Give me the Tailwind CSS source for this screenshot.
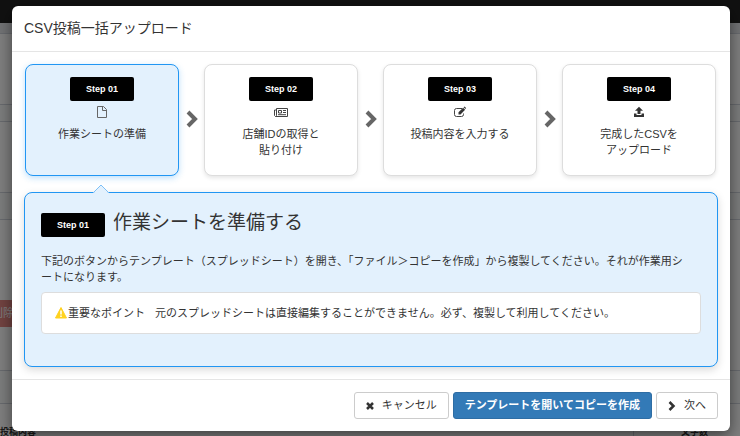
<!DOCTYPE html>
<html lang="ja">
<head>
  <meta charset="UTF-8">
  <meta name="viewport" content="width=device-width, initial-scale=1.0">
  <title>CSV投稿一括アップロード</title>
  <script src="https://cdn.jsdelivr.net/npm/@tailwindcss/browser@4"></script>
</head>
<body class="min-h-screen overflow-hidden bg-white font-['Liberation_Sans','Noto_Sans_CJK_JP',sans-serif] text-[11px] leading-4 text-[#333]">

  <!-- page behind the dialog -->
  <div class="absolute inset-0 flex flex-col overflow-hidden" aria-hidden="true">
    <div class="h-[23px] shrink-0 bg-[#222]"></div>
    <div class="h-[11px] shrink-0 border-b border-gray-300 bg-gray-200"></div>
    <div class="h-[71px] shrink-0 border-b border-gray-300"></div>
    <div class="h-[17px] shrink-0 border-b border-gray-300 bg-gray-50"></div>
    <div class="h-[71px] shrink-0 border-b border-gray-300"></div>
    <div class="h-[27px] shrink-0 border-b border-gray-300 bg-gray-50"></div>
    <div class="h-[151px] shrink-0 border-b border-gray-300 pt-[80px]">
      <span class="-ml-2 block h-[27px] w-16 bg-[#d9534f] leading-[27px] text-white opacity-70">削除</span>
    </div>
    <div class="h-[33px] shrink-0 border-b border-gray-300 bg-gray-50"></div>
    <div class="flex grow justify-between text-[9px] font-bold">
      <span class="pt-5">投稿内容</span>
      <span class="w-[107px] border-l border-gray-300 pt-5 pr-8 text-right">文字数</span>
    </div>
  </div>
  <div class="absolute inset-0 bg-black/50"></div>

  <!-- dialog -->
  <div class="relative pt-[6px] pr-[10px] pl-3">
    <div role="dialog" aria-labelledby="dialogTitle" class="rounded-md bg-white shadow-[0_5px_15px_rgba(0,0,0,0.5)]">
      <div class="border-b border-[#e5e5e5] px-3 py-3">
        <h4 id="dialogTitle" class="text-[14px] leading-[21px]">CSV投稿一括アップロード</h4>
      </div>

      <div class="px-3 pt-3 pb-3">
        <ol class="flex items-stretch pr-0.5 pl-px">
          <li class="flex h-[112px] flex-1 flex-col items-center rounded-lg border border-[#2196f3] bg-[#e3f1fd] pt-3 text-center shadow-[0_2px_6px_rgba(33,150,243,0.3)]">
            <span class="w-16 rounded-xs bg-black text-center text-[9px] leading-6 font-bold text-white">Step 01</span>
            <svg class="mt-[3px] h-4 w-4" viewBox="0 0 16 16" fill="none" stroke="#666">
              <path d="M3.5 2.5h6l3 3v8h-9z" stroke-linejoin="round"/>
              <path d="M8.500 2.500v4h4"/>
            </svg>
            <span class="mt-[6px]">作業シートの準備</span>
          </li>
          <li class="flex w-[25px] items-center justify-center pb-0.5">
            <svg class="h-[18px] w-3" viewBox="0 0 12 18" fill="none" stroke="#666" stroke-width="4"><path d="M2 2l7 7-7 7"/></svg>
          </li>
          <li class="flex h-[112px] flex-1 flex-col items-center rounded-lg border border-[#ddd] bg-white pt-3 text-center shadow-[0_2px_4px_rgba(0,0,0,0.1)]">
            <span class="w-16 rounded-xs bg-black text-center text-[9px] leading-6 font-bold text-white">Step 02</span>
            <svg class="mt-[3px] h-4 w-4" viewBox="0 0 16 16" fill="none" stroke="#444">
              <path d="M3.500 4.500h11v8h-12l-1-1v-5.500h2M3.500 4.500v7l-1 1"/>
              <path d="M5.500 6.500h3v2.500h-3zM10 6.500h3M10 8.500h3M5 10.700h8"/>
            </svg>
            <span class="mt-[6px]">店舗IDの取得と<br>貼り付け</span>
          </li>
          <li class="flex w-[25px] items-center justify-center pb-0.5">
            <svg class="h-[18px] w-3" viewBox="0 0 12 18" fill="none" stroke="#666" stroke-width="4"><path d="M2 2l7 7-7 7"/></svg>
          </li>
          <li class="flex h-[112px] flex-1 flex-col items-center rounded-lg border border-[#ddd] bg-white pt-3 text-center shadow-[0_2px_4px_rgba(0,0,0,0.1)]">
            <span class="w-16 rounded-xs bg-black text-center text-[9px] leading-6 font-bold text-white">Step 03</span>
            <svg class="mt-[3px] h-4 w-4" viewBox="0 0 16 16" fill="none" stroke="#444">
              <path d="M10 4.500h-5.500a2 2 0 0 0-2 2v4a2 2 0 0 0 2 2h5a2 2 0 0 0 2-2v-1"/>
              <path d="M6.500 10.500v-2.200l4.600-4.600 2 2-4.600 4.800z" fill="#333" stroke="none"/>
              <path d="M11.600 3.200l.9-.7 1.600 1.600-.7.900z" fill="#333" stroke="none"/>
            </svg>
            <span class="mt-[6px]">投稿内容を入力する</span>
          </li>
          <li class="flex w-[25px] items-center justify-center pb-0.5">
            <svg class="h-[18px] w-3" viewBox="0 0 12 18" fill="none" stroke="#666" stroke-width="4"><path d="M2 2l7 7-7 7"/></svg>
          </li>
          <li class="flex h-[112px] flex-1 flex-col items-center rounded-lg border border-[#ddd] bg-white pt-3 text-center shadow-[0_2px_4px_rgba(0,0,0,0.1)]">
            <span class="w-16 rounded-xs bg-black text-center text-[9px] leading-6 font-bold text-white">Step 04</span>
            <svg class="mt-[3px] h-4 w-4" viewBox="0 0 16 16" fill="#333">
              <path d="M8 2.800l4 3.900h-2.500v3.300h-3v-3.300h-2.500z"/>
              <path d="M3 9.500h2.500v1.500h5v-1.500h2.500v3.500h-10z"/>
            </svg>
            <span class="mt-[6px]">完成したCSVを<br>アップロード</span>
          </li>
        </ol>

        <section class="relative mt-4 rounded-lg border border-[#2196f3] bg-[#e3f1fd] px-4 pt-4 pb-8 shadow-[0_3px_8px_rgba(0,0,0,0.15)]">
          <svg class="absolute -top-[9px] left-[67px] h-[10px] w-[18px]" viewBox="0 0 18 10">
            <path d="M1 9.500l8-8 8 8v.5h-16z" fill="#e3f1fd"/>
            <path d="M1 9l8-8 8 8" fill="none" stroke="#7cc0f8"/>
          </svg>
          <div class="flex items-end gap-2">
            <span class="w-16 rounded-xs bg-black text-center text-[9px] leading-6 font-bold text-white">Step 01</span>
            <h3 class="text-[19px] leading-7">作業シートを準備する</h3>
          </div>
          <p class="mt-4 pr-2">下記のボタンからテンプレート（スプレッドシート）を開き、「ファイル＞コピーを作成」から複製してください。それが作業用シートになります。</p>
          <div class="mt-[7px] flex items-center rounded-sm border border-[#ddd] bg-white px-3 py-3">
            <svg class="h-4 w-[14px]" viewBox="0 0 14 16">
              <path d="M7 2.500l5.500 10.500h-11z" fill="#ffd21f" stroke="#ffd21f" stroke-linejoin="round"/>
              <path d="M7 5.500v4M7 10.500v1.500" stroke="#fff" stroke-width="1.500"/>
            </svg>
            <strong class="font-normal">重要なポイント</strong>
            <span class="ml-[10px]">元のスプレッドシートは直接編集することができません。必ず、複製して利用してください。</span>
          </div>
        </section>
      </div>

      <div class="flex justify-end gap-1 border-t border-[#e5e5e5] p-3 leading-[15px]">
        <button type="button" class="flex items-center gap-2 rounded-[3px] border border-[#ccc] bg-white px-[11px] py-[5px]">
          <svg class="h-2 w-2" viewBox="0 0 8 8" stroke="#333" stroke-width="2.500"><path d="M1 1l6 6M7 1l-6 6"/></svg>
          キャンセル
        </button>
        <button type="button" class="rounded-[3px] border border-[#2e6da4] bg-[#337ab7] px-[11px] py-[5px] font-bold text-white">テンプレートを開いてコピーを作成</button>
        <button type="button" class="flex items-center gap-2 rounded-[3px] border border-[#ccc] bg-white px-[11px] py-[5px]">
          <svg class="h-[10px] w-2" viewBox="0 0 8 10" fill="none" stroke="#333" stroke-width="2.500"><path d="M1.500 1l4 4-4 4"/></svg>
          次へ
        </button>
      </div>
    </div>
  </div>
</body>
</html>
